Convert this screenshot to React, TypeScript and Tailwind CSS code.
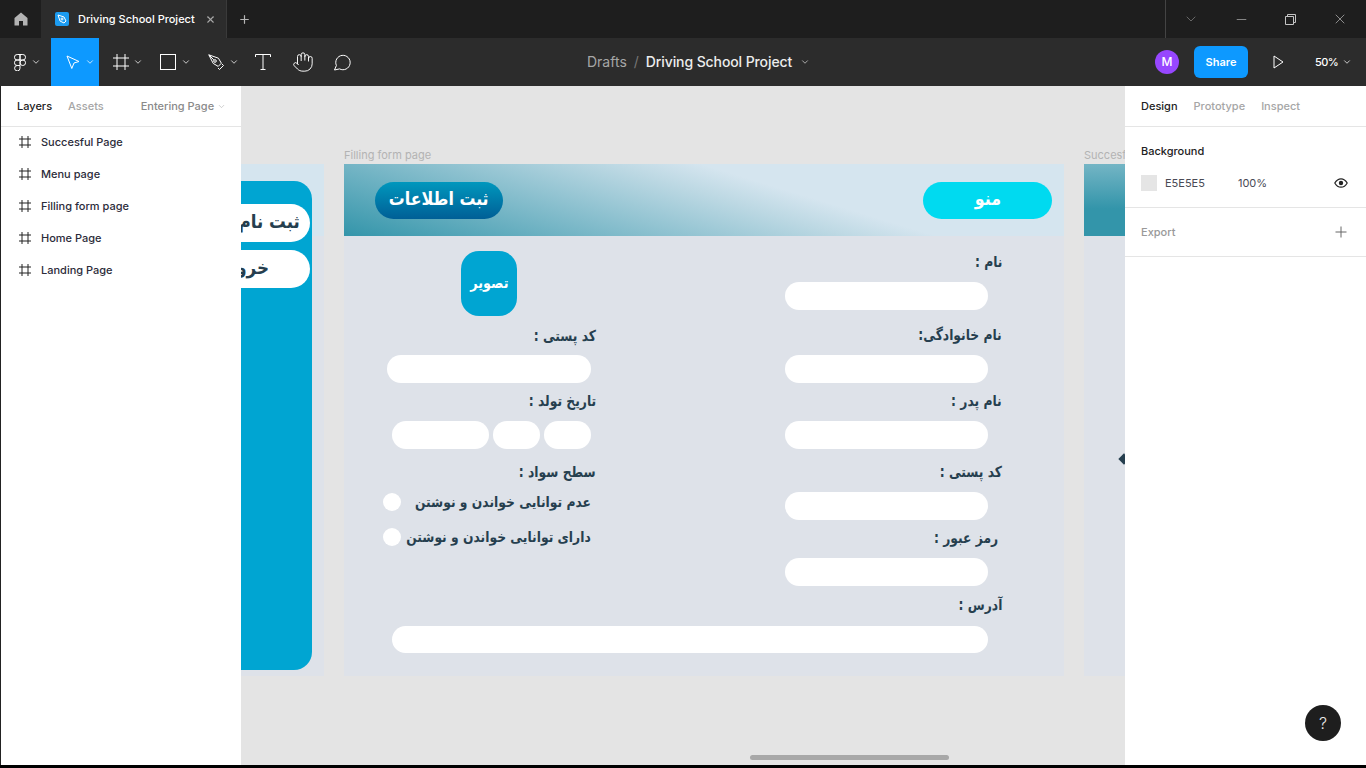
import { ChevronDown, Hand, Minus, Plus, X } from "lucide-react";

const fa = "font-['DejaVu_Sans',sans-serif] font-bold";

const layers = ["Succesful Page", "Menu page", "Filling form page", "Home Page", "Landing Page"];

function FrameIcon({ size = 12, className = "" }: { size?: number; className?: string }) {
  return (
    <svg width={size} height={size} viewBox="0 0 12 12" fill="none" stroke="currentColor" strokeWidth={12 / size} className={className}>
      <path d="M3 0v12M9 0v12M0 3h12M0 9h12" />
    </svg>
  );
}

function ToolButton({ children, active, caret, width = "w-12", pad = "pl-[14px]", gap = "gap-[5px]" }: { children: React.ReactNode; active?: boolean; caret?: boolean; width?: string; pad?: string; gap?: string }) {
  return (
    <div className={`flex h-12 items-center ${gap} ${width} ${pad} ${active ? "bg-[#0d99ff]" : ""}`}>
      {children}
      {caret && <ChevronDown size={10} strokeWidth={1.8} className="text-white" />}
    </div>
  );
}

function Label({ text, className = "" }: { text: string; className?: string }) {
  return (
    <div dir="rtl" className={`flex h-6 origin-right scale-x-[0.82] items-center text-[15px] leading-6 whitespace-nowrap text-[#263f4f] ${fa} ${className}`}>
      {text}
    </div>
  );
}

function Input({ className = "" }: { className?: string }) {
  return <div className={`h-7 rounded-full bg-white ${className}`} />;
}

function RightField({ label, labelClass, top }: { label: string; labelClass?: string; top: string }) {
  return (
    <div className={`flex flex-col items-end ${top}`}>
      <Label text={label} className={labelClass} />
      <Input className="mt-2 mr-[14px] w-[203px]" />
    </div>
  );
}

function RadioRow({ text, top }: { text: string; top: string }) {
  return (
    <div className={`mr-[5px] flex h-6 items-center ${top}`}>
      <span className="h-[18px] w-[18px] shrink-0 rounded-full bg-white" />
      <div className="flex min-w-0 flex-1 justify-end">
        <span dir="rtl" className={`shrink-0 origin-right scale-x-[0.88] text-[14px] whitespace-nowrap text-[#263f4f] ${fa}`}>
          {text}
        </span>
      </div>
    </div>
  );
}

function TopBars() {
  return (
    <>
      <div className="flex h-[38px] shrink-0 items-center bg-[#1e1e1e] text-white">
        <div className="flex h-full w-[41px] items-center justify-center">
          <svg width="14" height="14" viewBox="0 0 14 14" fill="#b3b3b3">
            <path d="M7 .5 13.5 6v7.5H9V9H5v4.5H.5V6z" />
          </svg>
        </div>
        <div className="flex h-full w-[186px] items-center border-r border-[#3a3a3a] bg-[#2c2c2c] pl-[14px]">
          <div className="flex h-[14px] w-[14px] items-center justify-center rounded-[2px] bg-[#1c9bf0]">
            <svg width="10" height="10" viewBox="0 0 10 10" fill="none" stroke="white" strokeWidth="1">
              <path d="M1 1l6 2 2 4-2 2-4-2z" />
              <circle cx="5" cy="5" r="1" />
            </svg>
          </div>
          <span className="ml-[9px] font-['Inter',sans-serif] text-[11px] font-medium whitespace-nowrap">Driving School Project</span>
          <X size={11} strokeWidth={2.4} className="ml-[10px] text-[#a8a8a8]" />
        </div>
        <Plus size={13} strokeWidth={2.2} className="ml-[11px] text-[#b5b5b5]" />
        <div className="ml-auto flex h-full w-[201px] items-center border-l border-[#444] text-[#c4c4c4]">
          <ChevronDown size={16} strokeWidth={1} className="ml-[17px] text-[#8c8c8c]" />
          <Minus size={15} strokeWidth={1} className="ml-[35px]" />
          <svg width="11" height="11" viewBox="0 0 11 11" fill="none" stroke="currentColor" strokeWidth="1" className="ml-[36px]">
            <path d="M.5 2.5h8v8h-8zM2.5 2.5v-2h8v8h-2" />
          </svg>
          <X size={16} strokeWidth={1} className="ml-[36px]" />
        </div>
      </div>
      <div className="flex h-12 shrink-0 items-center bg-[#2c2c2c] text-white">
        <ToolButton caret width="w-[51px]">
          <svg width="12" height="17" viewBox="0 0 12 17" fill="none" stroke="white" strokeWidth="1">
            <path d="M6 .5H3.2a2.7 2.7 0 0 0 0 5.5H6zM6 .5h2.8a2.7 2.7 0 0 1 0 5.5H6zM6 6H3.2a2.7 2.7 0 0 0 0 5.5H6zM6 11.5H3.2A2.7 2.7 0 1 0 6 14.2z" />
            <circle cx="8.8" cy="8.75" r="2.75" />
          </svg>
        </ToolButton>
        <ToolButton active caret pad="pl-[15px]">
          <svg width="14" height="15" viewBox="0 0 14 15" fill="none" stroke="white" strokeWidth="1">
            <path d="M1 1l12 5.5-5 1.5-2.2 5.5z" />
          </svg>
        </ToolButton>
        <ToolButton caret gap="gap-1">
          <FrameIcon size={16} />
        </ToolButton>
        <ToolButton caret pad="pl-[13px]" gap="gap-[5px]">
          <span className="h-4 w-4 border border-white" />
        </ToolButton>
        <ToolButton caret pad="pl-[13px]" gap="gap-[5px]">
          <svg width="16" height="16" viewBox="0 0 16 16" fill="none" stroke="white" strokeWidth="1">
            <path d="M.8.8l9.6 3.4 3 5-3.2 3.2-5-3z" />
            <path d="M.8.8l5 5M10 14l1.5 1.5 4-4L14 10" />
            <circle cx="7" cy="7" r="1.3" />
          </svg>
        </ToolButton>
        <ToolButton width="w-10" pad="pl-[12px]">
          <svg width="16" height="16" viewBox="0 0 16 16" fill="none" stroke="white" strokeWidth="1">
            <path d="M.5 3V.5h15V3M8 .5v15M5.5 15.5h5" />
          </svg>
        </ToolButton>
        <ToolButton width="w-10" pad="pl-[9px]">
          <Hand size={22} strokeWidth={1.05} />
        </ToolButton>
        <ToolButton width="w-[38px]" pad="pl-[10px]">
          <svg width="18" height="18" viewBox="0 0 18 18" fill="none" stroke="white" strokeWidth="1">
            <path d="M1.5 17l1.9-4.5A7.2 7.2 0 1 1 6.6 15.9z" />
          </svg>
        </ToolButton>
        <div className="ml-[226px] flex items-center pb-[2px] font-['Inter',sans-serif] text-[14px] whitespace-nowrap">
          <span className="text-[#a6a6a6]">Drafts</span>
          <span className="mx-[7px] text-[#777]">/</span>
          <span className="font-medium tracking-[-0.1px] text-[#ececec]">Driving School Project</span>
          <ChevronDown size={10} strokeWidth={1.6} className="mt-[2px] ml-2 text-[#e8e8e8]" />
        </div>
        <div className="ml-auto flex items-center font-['Inter',sans-serif]">
          <div className="flex h-6 w-6 items-center justify-center rounded-full bg-[#9747ff] text-[12px] font-medium">M</div>
          <div className="ml-[15px] flex h-8 w-[54px] items-center justify-center rounded-[6px] bg-[#0d99ff] text-[11px] font-semibold">Share</div>
          <svg width="11" height="14" viewBox="0 0 11 14" fill="none" stroke="white" strokeWidth="1" className="ml-[25px]">
            <path d="M1 1l9 6-9 6z" />
          </svg>
          <span className="ml-[31px] text-[11px] font-medium tracking-[-0.6px]">50%</span>
          <ChevronDown size={10} strokeWidth={1.8} className="mr-[14px] ml-1 text-white" />
        </div>
      </div>
    </>
  );
}

function LeftPanel() {
  return (
    <aside className="w-[241px] shrink-0 border-l border-[#222] bg-white font-['Inter',sans-serif] text-[11px] font-medium">
      <div className="flex h-[41px] items-center border-b border-[#e5e5e5] pl-4 whitespace-nowrap">
        <span className="text-[#222]">Layers</span>
        <span className="ml-4 text-[#a6a6a6]">Assets</span>
        <span className="ml-[37px] text-[#8a8a8a]">Entering Page</span>
        <ChevronDown size={9} strokeWidth={1.4} className="ml-[3px] text-[#a6a6a6]" />
      </div>
      <div className="-mt-px">
        {layers.map((name) => (
          <div key={name} className="flex h-8 items-center pl-[18px] text-[#2c2c3a]">
            <FrameIcon size={12} className="text-[#222]" />
            <span className="ml-[10px]">{name}</span>
          </div>
        ))}
      </div>
    </aside>
  );
}

function RightPanel() {
  return (
    <aside className="w-[241px] shrink-0 bg-white font-['Inter',sans-serif] text-[11px]">
      <div className="flex h-[41px] items-center gap-4 border-b border-[#e5e5e5] pl-4 font-medium">
        <span className="text-[#222]">Design</span>
        <span className="text-[#a6a6a6]">Prototype</span>
        <span className="text-[#a6a6a6]">Inspect</span>
      </div>
      <div className="h-[81px] border-b border-[#e5e5e5] px-4 pt-4">
        <div className="font-medium leading-[16px] text-[#222]">Background</div>
        <div className="mt-4 flex h-4 items-center">
          <span className="h-4 w-4 bg-[#e5e5e5]" />
          <span className="ml-2 text-[#4a4a55]">E5E5E5</span>
          <span className="ml-[33px] text-[#4a4a55]">100%</span>
          <svg width="14" height="10" viewBox="0 0 14 10" fill="none" stroke="#222" strokeWidth="1.2" className="mr-[2px] ml-auto">
            <path d="M.8 5C2.4 2.2 4.5.8 7 .8s4.6 1.4 6.2 4.2C11.6 7.8 9.5 9.2 7 9.2S2.4 7.8.8 5z" />
            <circle cx="7" cy="5" r="2.2" fill="#222" stroke="none" />
          </svg>
        </div>
      </div>
      <div className="flex h-[49px] items-center justify-between border-b border-[#e5e5e5] px-4 font-medium text-[#999]">
        <span>Export</span>
        <svg width="12" height="12" viewBox="0 0 12 12" fill="none" stroke="#666" strokeWidth="1" className="mr-[3px]">
          <path d="M6 .5v11M.5 6h11" />
        </svg>
      </div>
    </aside>
  );
}

function MenuFrame() {
  return (
    <div className="absolute top-[78px] left-[-99px] flex h-[512px] w-[182px] justify-end bg-[linear-gradient(#d5e5ef_72px,#dee2e9_72px)] pt-[17px] pr-[12px]">
      <div className="flex h-[489px] w-[300px] shrink-0 flex-col items-end gap-2 rounded-r-[18px] bg-[#00a5d2] pt-[23px] pr-[2px]">
        <div className={`flex h-[38px] w-[280px] items-center justify-end rounded-r-full bg-white pr-[10px] pb-1 text-[19px] whitespace-nowrap text-[#263f4f] ${fa}`}>
          <span dir="rtl" className="origin-right scale-x-[0.88]">ثبت نام</span>
        </div>
        <div className={`flex h-[38px] w-[280px] items-center justify-end rounded-r-full bg-white pr-[41px] pb-1 text-[19px] whitespace-nowrap text-[#263f4f] ${fa}`}>
          <span dir="rtl" className="origin-right scale-x-[0.88]">خروج</span>
        </div>
      </div>
    </div>
  );
}

function FormFrame() {
  return (
    <div className="absolute top-[78px] left-[103px] h-[512px] w-[720px] bg-[#dee2e9]">
      <div className="absolute top-[-16px] left-0 font-['Inter',sans-serif] text-[11px] leading-[14px] text-[#b3b3b3]">Filling form page</div>
      <div className="flex h-[72px] items-center justify-between bg-[linear-gradient(197deg,#d5e5ef_38%,#bcd8e3_48%,#3395aa_100%)] pr-3 pl-[31px]">
        <div className={`flex h-[37px] w-[128px] items-center justify-center rounded-full bg-[linear-gradient(#0097bd,#005f96)] pb-1 text-[18px] whitespace-nowrap text-white ${fa}`}>
          <span dir="rtl" className="scale-x-[0.88]">ثبت اطلاعات</span>
        </div>
        <div className={`flex h-[37px] w-[129px] items-center justify-center rounded-full bg-[#00daf0] pb-1 text-[18px] text-white ${fa}`}>
          <span dir="rtl" className="scale-x-[0.88]">منو</span>
        </div>
      </div>
      <div className="flex">
        <div className="ml-[39px] flex w-[213px] flex-col items-stretch">
          <div className={`mt-[15px] ml-[78px] flex h-[65px] w-14 items-center justify-center rounded-[18px] bg-[#00a5d2] text-[15px] text-white ${fa}`}>
            <span dir="rtl" className="scale-x-[0.85]">تصویر</span>
          </div>
          <div className="mt-2 flex justify-end">
            <Label text="کد پستی :" />
          </div>
          <Input className="mt-[7px] mr-[5px] ml-1" />
          <div className="mt-[6px] flex justify-end">
            <Label text="تاریخ تولد :" />
          </div>
          <div className="mt-2 mr-[5px] ml-[9px] flex gap-1">
            <Input className="w-[97px]" />
            <Input className="w-[47px]" />
            <Input className="w-[47px]" />
          </div>
          <div className="mt-[11px] flex justify-end">
            <Label text="سطح سواد :" />
          </div>
          <RadioRow text="عدم توانایی خواندن و نوشتن" top="mt-[6px]" />
          <RadioRow text="دارای توانایی خواندن و نوشتن" top="mt-[11px]" />
        </div>
        <div className="ml-[189px] w-[217px]">
          <RightField label="نام :" top="mt-[14px]" />
          <RightField label="نام خانوادگی:" top="mt-[13px]" />
          <RightField label="نام پدر :" top="mt-[6px]" />
          <RightField label="کد پستی :" top="mt-[11px]" />
          <RightField label="رمز عبور :" labelClass="mr-1" top="mt-[6px]" />
        </div>
      </div>
      <div className="mt-[7px] flex flex-col items-end pr-[62px]">
        <Label text="آدرس :" />
        <Input className="mt-[9px] mr-[14px] h-[27px] w-[596px]" />
      </div>
    </div>
  );
}

function SuccessFrame() {
  return (
    <div className="absolute top-[78px] left-[843px] h-[512px] w-[720px] bg-[#dee2e9]">
      <div className="absolute top-[-16px] left-0 font-['Inter',sans-serif] text-[11px] leading-[14px] whitespace-nowrap text-[#b3b3b3]">Succesful Page</div>
      <div className="h-[72px] bg-[linear-gradient(#74b5c5,#3395aa_62%,#3395aa)]" />
      <div className="absolute top-[291px] left-[36px] h-2 w-2 rotate-45 bg-[#263f4f]" />
    </div>
  );
}

export default function App() {
  return (
    <div className="relative flex h-[768px] w-[1366px] flex-col overflow-hidden bg-black">
      <TopBars />
      <div className="flex h-[679px] shrink-0">
        <LeftPanel />
        <main className="relative flex-1 overflow-hidden bg-[#e4e4e4]">
          <MenuFrame />
          <FormFrame />
          <SuccessFrame />
          <div className="absolute top-[669px] left-[509px] h-[5px] w-[199px] rounded-full bg-[#a8a8a8]" />
        </main>
        <RightPanel />
      </div>
      <div className="absolute top-[705px] left-[1305px] flex h-9 w-9 items-center justify-center rounded-full bg-[#1e1e1e] font-['Inter',sans-serif] text-[16px] font-light text-[#e8e8e8]">?</div>
    </div>
  );
}
